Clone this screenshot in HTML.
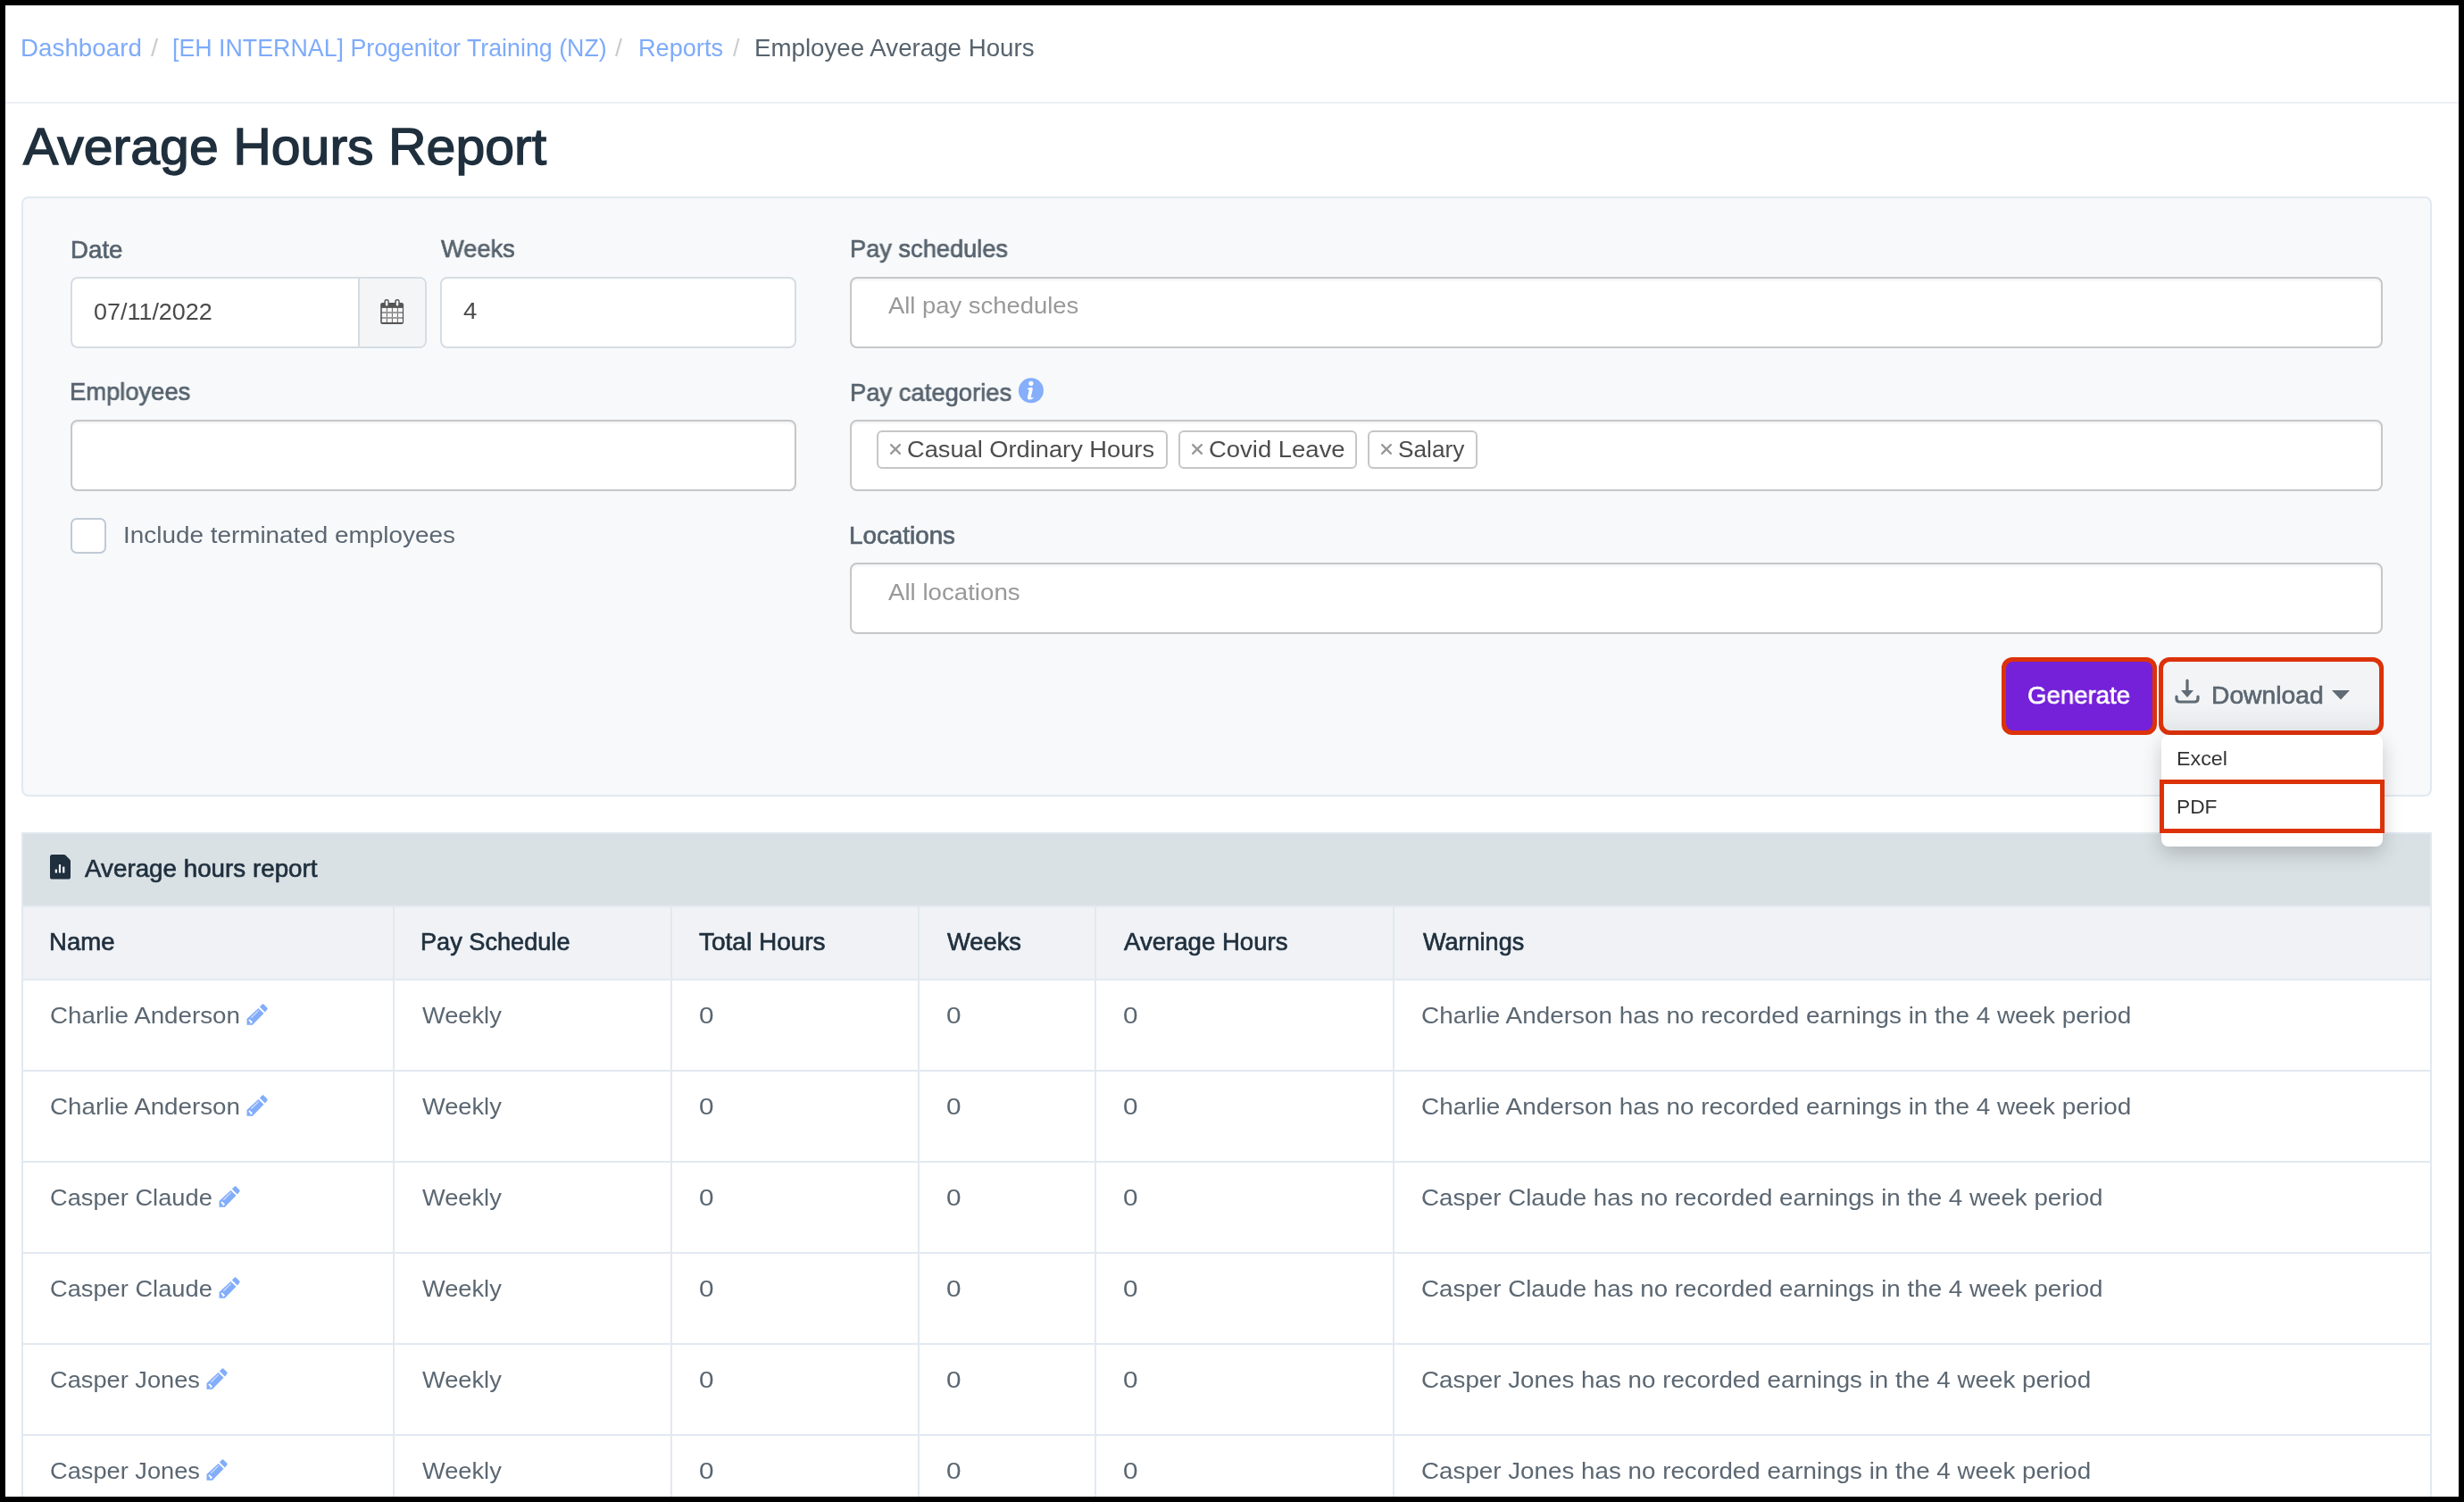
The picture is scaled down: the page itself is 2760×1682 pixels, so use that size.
<!DOCTYPE html>
<html><head><meta charset="utf-8"><style>
html,body{margin:0;padding:0;}
body{width:2760px;height:1682px;position:relative;overflow:hidden;background:#fff;font-family:"Liberation Sans",sans-serif;}
.t{position:absolute;white-space:nowrap;line-height:1;transform-origin:0 0;will-change:transform;}
.box{position:absolute;box-sizing:content-box;}
.sel{background:#fff;border:2px solid #c7c7c7;border-radius:8px;box-shadow:inset 0 2px 3px rgba(0,0,0,0.05);}
.frame{position:absolute;left:0;top:0;width:2748px;height:1670px;border:6px solid #000;}
</style></head><body>
<div class="t" style="left:23.38px;top:40.82px;font-size:26.79px;color:#7eabfa;font-weight:400;transform:scaleX(1.0373);">Dashboard</div>
<div class="t" style="left:168.80px;top:40.82px;font-size:26.79px;color:#c9cccf;font-weight:400;transform:scaleX(1.0931);">/</div>
<div class="t" style="left:192.93px;top:40.82px;font-size:26.79px;color:#7eabfa;font-weight:400;">[EH INTERNAL] Progenitor Training (NZ)</div>
<div class="t" style="left:689.00px;top:40.82px;font-size:26.79px;color:#c9cccf;font-weight:400;transform:scaleX(1.0665);">/</div>
<div class="t" style="left:714.83px;top:40.82px;font-size:26.79px;color:#7eabfa;font-weight:400;transform:scaleX(1.0130);">Reports</div>
<div class="t" style="left:820.60px;top:40.82px;font-size:26.79px;color:#c9cccf;font-weight:400;transform:scaleX(0.9865);">/</div>
<div class="t" style="left:845.18px;top:40.82px;font-size:26.79px;color:#56636e;font-weight:400;transform:scaleX(1.0342);">Employee Average Hours</div>
<div class="box" style="left:6px;top:114px;width:2748px;height:2px;background:#eceff3"></div>
<div class="t" style="left:25.59px;top:136.10px;font-size:57.77px;color:#1f2f3d;font-weight:400;-webkit-text-stroke:1.39px #1f2f3d;transform:scaleX(1.0216);">Average Hours Report</div>
<div class="box" style="left:24px;top:220px;width:2696px;height:668px;background:#f8f9fb;border:2px solid #e2e9f0;border-radius:8px"></div>
<div class="t" style="left:78.56px;top:265.61px;font-size:27.63px;color:#56636e;font-weight:400;-webkit-text-stroke:0.66px #56636e;transform:scaleX(1.0030);">Date</div>
<div class="t" style="left:493.97px;top:265.31px;font-size:27.63px;color:#56636e;font-weight:400;-webkit-text-stroke:0.66px #56636e;transform:scaleX(0.9864);">Weeks</div>
<div class="t" style="left:952.09px;top:265.11px;font-size:27.63px;color:#56636e;font-weight:400;-webkit-text-stroke:0.66px #56636e;transform:scaleX(0.9853);">Pay schedules</div>
<div class="t" style="left:78.38px;top:425.41px;font-size:27.63px;color:#56636e;font-weight:400;-webkit-text-stroke:0.66px #56636e;transform:scaleX(0.9903);">Employees</div>
<div class="t" style="left:951.88px;top:425.61px;font-size:27.63px;color:#56636e;font-weight:400;-webkit-text-stroke:0.66px #56636e;transform:scaleX(0.9915);">Pay categories</div>
<div class="t" style="left:950.95px;top:586.31px;font-size:27.63px;color:#56636e;font-weight:400;-webkit-text-stroke:0.66px #56636e;transform:scaleX(1.0064);">Locations</div>
<div class="box" style="left:79px;top:310px;width:395px;height:76px;background:#fff;border:2px solid #d5dde3;border-radius:8px;overflow:hidden"><div style="position:absolute;left:320px;top:0;width:75px;height:76px;background:#f3f5f7;border-left:2px solid #d5dde3"></div></div>
<div class="t" style="left:104.92px;top:335.56px;font-size:26.51px;color:#4a4a4a;font-weight:400;transform:scaleX(1.0162);">07/11/2022</div>
<svg class="box" style="left:420px;top:330px" width="38" height="38" viewBox="0 0 38 38"><rect x="6.2" y="9" width="25.9" height="23.9" rx="2.2" fill="#555"/><rect x="7.8" y="19.1" width="23" height="1.6" fill="#9b9b9b"/><rect x="7.8" y="25.0" width="23" height="1.6" fill="#9b9b9b"/><rect x="7.8" y="14.9" width="5.1" height="4.2" fill="#f7f7f8"/><rect x="13.8" y="14.9" width="5.1" height="4.2" fill="#f7f7f8"/><rect x="19.8" y="14.9" width="5.1" height="4.2" fill="#f7f7f8"/><rect x="25.8" y="14.9" width="5.1" height="4.2" fill="#f7f7f8"/><rect x="7.8" y="20.8" width="5.1" height="4.2" fill="#f7f7f8"/><rect x="13.8" y="20.8" width="5.1" height="4.2" fill="#f7f7f8"/><rect x="19.8" y="20.8" width="5.1" height="4.2" fill="#f7f7f8"/><rect x="25.8" y="20.8" width="5.1" height="4.2" fill="#f7f7f8"/><rect x="7.8" y="26.7" width="5.1" height="4.2" fill="#f7f7f8"/><rect x="13.8" y="26.7" width="5.1" height="4.2" fill="#f7f7f8"/><rect x="19.8" y="26.7" width="5.1" height="4.2" fill="#f7f7f8"/><rect x="25.8" y="26.7" width="5.1" height="4.2" fill="#f7f7f8"/><rect x="10.4" y="5.1" width="5.4" height="8.1" rx="2.7" fill="#555"/><rect x="11.9" y="6.6" width="2.5" height="6" rx="1.25" fill="#f7f7f8"/><rect x="22.3" y="5.1" width="5.4" height="8.1" rx="2.7" fill="#555"/><rect x="23.8" y="6.6" width="2.5" height="6" rx="1.25" fill="#f7f7f8"/></svg>
<div class="box" style="left:493px;top:310px;width:395px;height:76px;background:#fff;border:2px solid #d5dde3;border-radius:8px"></div>
<div class="t" style="left:519.45px;top:335.06px;font-size:26.51px;color:#4a4a4a;font-weight:400;transform:scaleX(1.0354);">4</div>
<div class="box sel" style="left:952px;top:310px;width:1713px;height:76px"></div>
<div class="t" style="left:995.40px;top:329.85px;font-size:25.81px;color:#999999;font-weight:400;transform:scaleX(1.0622);">All pay schedules</div>
<div class="box sel" style="left:79px;top:470px;width:809px;height:76px"></div>
<div class="box sel" style="left:952px;top:470px;width:1713px;height:76px"></div>
<div class="box sel" style="left:952px;top:630px;width:1713px;height:76px"></div>
<div class="t" style="left:994.70px;top:651.35px;font-size:25.81px;color:#999999;font-weight:400;transform:scaleX(1.0723);">All locations</div>
<div class="box" style="left:79px;top:580px;width:36px;height:36px;background:#fff;border:2px solid #c0cad5;border-radius:7px"></div>
<div class="t" style="left:138.49px;top:586.75px;font-size:25.81px;color:#5b6772;font-weight:400;transform:scaleX(1.0806);">Include terminated employees</div>
<svg class="box" style="left:1136px;top:418px" width="38" height="38" viewBox="0 0 38 38"><circle cx="18.9" cy="19.35" r="14" fill="#85aefb"/><circle cx="18.9" cy="11.3" r="2.6" fill="#fff"/><path d="M14.2 17.3 Q17 15.6 19.8 15.8 Q21.2 16.4 20.6 19 L18.8 26.3 Q18.6 27.6 19.6 27.3 L22 27.2 Q20.5 29.6 16.8 29.5 Q14.6 29.3 15 26.8 L16.6 19.3 Q16.8 17.6 14.2 17.3 Z" fill="#fff"/></svg>
<div class="box" style="left:982px;top:482px;width:322px;height:39px;background:#fff;border:2px solid #c6c6c6;border-radius:6px"></div><svg class="box" style="left:996.1px;top:495.5px" width="14" height="14" viewBox="0 0 14 14"><path d="M2.1 2.1 L11.9 11.9 M11.9 2.1 L2.1 11.9" stroke="#999" stroke-width="2.3" stroke-linecap="round"/></svg><div class="t" style="left:1016.24px;top:490.09px;font-size:26.23px;color:#4c4c4c;font-weight:400;transform:scaleX(1.0389);">Casual Ordinary Hours</div>
<div class="box" style="left:1320px;top:482px;width:196px;height:39px;background:#fff;border:2px solid #c6c6c6;border-radius:6px"></div><svg class="box" style="left:1333.5px;top:495.5px" width="14" height="14" viewBox="0 0 14 14"><path d="M2.1 2.1 L11.9 11.9 M11.9 2.1 L2.1 11.9" stroke="#999" stroke-width="2.3" stroke-linecap="round"/></svg><div class="t" style="left:1353.63px;top:490.09px;font-size:26.23px;color:#4c4c4c;font-weight:400;transform:scaleX(1.0473);">Covid Leave</div>
<div class="box" style="left:1532px;top:482px;width:119px;height:39px;background:#fff;border:2px solid #c6c6c6;border-radius:6px"></div><svg class="box" style="left:1545.5px;top:495.5px" width="14" height="14" viewBox="0 0 14 14"><path d="M2.1 2.1 L11.9 11.9 M11.9 2.1 L2.1 11.9" stroke="#999" stroke-width="2.3" stroke-linecap="round"/></svg><div class="t" style="left:1565.69px;top:490.09px;font-size:26.23px;color:#4c4c4c;font-weight:400;">Salary</div>
<div class="box" style="left:2242px;top:736px;width:164px;height:77px;border:5px solid #dc3209;border-radius:12px;background:#dc3209"><div style="position:absolute;left:0;top:0;right:0;bottom:0;background:#7421d9;border-radius:8px"></div></div>
<div class="t" style="left:2270.70px;top:764.98px;font-size:27.91px;color:#fff;font-weight:400;-webkit-text-stroke:0.67px #fff;transform:scaleX(0.9893);">Generate</div>
<div class="box" style="left:2418px;top:736px;width:242px;height:77px;border:5px solid #dc3209;border-radius:12px;background:#dc3209"><div style="position:absolute;left:0;top:0;right:0;bottom:0;background:linear-gradient(#f2f4f6 0%,#f2f4f6 60%,#e6e9ec 100%);border-radius:8px"></div></div>
<svg class="box" style="left:2436px;top:760px" width="28" height="28" viewBox="0 0 28 28"><path d="M14 2 V16" stroke="#5f6b75" stroke-width="3.2" stroke-linecap="round"/><path d="M7 13 L14 21 L21 13 Z" fill="#5f6b75"/><path d="M2 20 V22.2 Q2 26 5.8 26 H22.2 Q26 26 26 22.2 V20" fill="none" stroke="#5f6b75" stroke-width="3.2" stroke-linecap="round"/></svg>
<div class="t" style="left:2476.92px;top:765.18px;font-size:27.91px;color:#5b6670;font-weight:400;-webkit-text-stroke:0.67px #5b6670;transform:scaleX(1.0120);">Download</div>
<svg class="box" style="left:2612px;top:773px" width="20" height="11" viewBox="0 0 20 11"><path d="M0 0 H20 L10 10.5 Z" fill="#5f6b75"/></svg>
<div class="box" style="left:24px;top:932px;width:2700px;height:760px;background:#fff"></div>
<div class="box" style="left:24px;top:932px;width:2700px;height:2px;background:#e2e9f0"></div>
<div class="box" style="left:26px;top:934px;width:2696px;height:80px;background:#dae1e5"></div>
<div class="box" style="left:24px;top:1014px;width:2700px;height:2px;background:#e2e9f0"></div>
<div class="box" style="left:26px;top:1016px;width:2696px;height:80px;background:#f0f2f6"></div>
<div class="box" style="left:24px;top:1096px;width:2700px;height:2px;background:#e2e9f0"></div>
<div class="box" style="left:24px;top:1198px;width:2700px;height:2px;background:#e2e9f0"></div>
<div class="box" style="left:24px;top:1300px;width:2700px;height:2px;background:#e2e9f0"></div>
<div class="box" style="left:24px;top:1402px;width:2700px;height:2px;background:#e2e9f0"></div>
<div class="box" style="left:24px;top:1504px;width:2700px;height:2px;background:#e2e9f0"></div>
<div class="box" style="left:24px;top:1606px;width:2700px;height:2px;background:#e2e9f0"></div>
<div class="box" style="left:24px;top:1708px;width:2700px;height:2px;background:#e2e9f0"></div>
<div class="box" style="left:24px;top:932px;width:2px;height:768px;background:#e2e9f0"></div>
<div class="box" style="left:440px;top:1016px;width:2px;height:684px;background:#e2e9f0"></div>
<div class="box" style="left:751px;top:1016px;width:2px;height:684px;background:#e2e9f0"></div>
<div class="box" style="left:1028px;top:1016px;width:2px;height:684px;background:#e2e9f0"></div>
<div class="box" style="left:1226px;top:1016px;width:2px;height:684px;background:#e2e9f0"></div>
<div class="box" style="left:1560px;top:1016px;width:2px;height:684px;background:#e2e9f0"></div>
<div class="box" style="left:2722px;top:932px;width:2px;height:768px;background:#e2e9f0"></div>
<svg class="box" style="left:56px;top:957.4px" width="23" height="28" viewBox="0 0 23 28"><path d="M2.5 0 H15.8 Q16.6 0 17.2 0.6 L22.4 5.8 Q23 6.4 23 7.2 V25 Q23 27.6 20.4 27.6 H2.5 Q0 27.6 0 25 V2.5 Q0 0 2.5 0 Z" fill="#1f2f3d"/><rect x="5.7" y="16.4" width="2.3" height="4.2" rx="0.4" fill="#eef1f3"/><rect x="9.9" y="10.9" width="2.2" height="9.7" rx="0.4" fill="#eef1f3"/><rect x="14.1" y="13.4" width="2.3" height="7.2" rx="0.4" fill="#eef1f3"/></svg>
<div class="t" style="left:95.48px;top:959.62px;font-size:26.79px;color:#1f2f3d;font-weight:400;-webkit-text-stroke:0.64px #1f2f3d;transform:scaleX(1.0375);">Average hours report</div>
<div class="t" style="left:55.47px;top:1041.50px;font-size:26.93px;color:#1f2f3d;font-weight:400;-webkit-text-stroke:0.65px #1f2f3d;transform:scaleX(1.0230);">Name</div>
<div class="t" style="left:471.30px;top:1041.50px;font-size:26.93px;color:#1f2f3d;font-weight:400;-webkit-text-stroke:0.65px #1f2f3d;transform:scaleX(1.0082);">Pay Schedule</div>
<div class="t" style="left:783.22px;top:1041.50px;font-size:26.93px;color:#1f2f3d;font-weight:400;-webkit-text-stroke:0.65px #1f2f3d;transform:scaleX(1.0400);">Total Hours</div>
<div class="t" style="left:1060.77px;top:1041.50px;font-size:26.93px;color:#1f2f3d;font-weight:400;-webkit-text-stroke:0.65px #1f2f3d;transform:scaleX(1.0144);">Weeks</div>
<div class="t" style="left:1258.68px;top:1041.50px;font-size:26.93px;color:#1f2f3d;font-weight:400;-webkit-text-stroke:0.65px #1f2f3d;transform:scaleX(1.0245);">Average Hours</div>
<div class="t" style="left:1593.97px;top:1041.50px;font-size:26.93px;color:#1f2f3d;font-weight:400;-webkit-text-stroke:0.65px #1f2f3d;transform:scaleX(1.0045);">Warnings</div>
<div class="t" style="left:55.91px;top:1123.76px;font-size:26.51px;color:#5b6772;font-weight:400;transform:scaleX(1.0478);">Charlie Anderson</div>
<svg class="box" style="left:269.5px;top:1118px" width="36" height="36" viewBox="0 0 36 36"><path d="M20.9 9.4 L23.5 6.8 Q24.5 5.8 25.5 6.8 L29.2 10.4 Q30.2 11.4 29.3 12.5 L26.9 15.5 Z" fill="#82adfa"/><path d="M19.4 10.9 L25.5 16.8 L12.9 29.7 L6.5 29.7 L6.5 23 Z" fill="#82adfa"/><path d="M8.3 24.8 L9.6 23.2 L13 26.4 L11.6 27.9 L10.5 27.9 L10.2 26.2 Z" fill="#fff"/><path d="M19.7 13.4 L11.3 21.7" stroke="#cfdffd" stroke-width="1.3"/></svg>
<div class="t" style="left:472.73px;top:1123.76px;font-size:26.51px;color:#5b6772;font-weight:400;transform:scaleX(1.0271);">Weekly</div>
<div class="t" style="left:783.11px;top:1123.76px;font-size:26.51px;color:#5b6772;font-weight:400;transform:scaleX(1.1237);">0</div>
<div class="t" style="left:1060.31px;top:1123.76px;font-size:26.51px;color:#5b6772;font-weight:400;transform:scaleX(1.1237);">0</div>
<div class="t" style="left:1257.81px;top:1123.76px;font-size:26.51px;color:#5b6772;font-weight:400;transform:scaleX(1.1237);">0</div>
<div class="t" style="left:1591.61px;top:1123.76px;font-size:26.51px;color:#5b6772;font-weight:400;transform:scaleX(1.0523);">Charlie Anderson has no recorded earnings in the 4 week period</div>
<div class="t" style="left:55.91px;top:1225.76px;font-size:26.51px;color:#5b6772;font-weight:400;transform:scaleX(1.0478);">Charlie Anderson</div>
<svg class="box" style="left:269.5px;top:1220px" width="36" height="36" viewBox="0 0 36 36"><path d="M20.9 9.4 L23.5 6.8 Q24.5 5.8 25.5 6.8 L29.2 10.4 Q30.2 11.4 29.3 12.5 L26.9 15.5 Z" fill="#82adfa"/><path d="M19.4 10.9 L25.5 16.8 L12.9 29.7 L6.5 29.7 L6.5 23 Z" fill="#82adfa"/><path d="M8.3 24.8 L9.6 23.2 L13 26.4 L11.6 27.9 L10.5 27.9 L10.2 26.2 Z" fill="#fff"/><path d="M19.7 13.4 L11.3 21.7" stroke="#cfdffd" stroke-width="1.3"/></svg>
<div class="t" style="left:472.73px;top:1225.76px;font-size:26.51px;color:#5b6772;font-weight:400;transform:scaleX(1.0271);">Weekly</div>
<div class="t" style="left:783.11px;top:1225.76px;font-size:26.51px;color:#5b6772;font-weight:400;transform:scaleX(1.1237);">0</div>
<div class="t" style="left:1060.31px;top:1225.76px;font-size:26.51px;color:#5b6772;font-weight:400;transform:scaleX(1.1237);">0</div>
<div class="t" style="left:1257.81px;top:1225.76px;font-size:26.51px;color:#5b6772;font-weight:400;transform:scaleX(1.1237);">0</div>
<div class="t" style="left:1591.61px;top:1225.76px;font-size:26.51px;color:#5b6772;font-weight:400;transform:scaleX(1.0523);">Charlie Anderson has no recorded earnings in the 4 week period</div>
<div class="t" style="left:55.94px;top:1327.76px;font-size:26.51px;color:#5b6772;font-weight:400;transform:scaleX(1.0284);">Casper Claude</div>
<svg class="box" style="left:238.5px;top:1322px" width="36" height="36" viewBox="0 0 36 36"><path d="M20.9 9.4 L23.5 6.8 Q24.5 5.8 25.5 6.8 L29.2 10.4 Q30.2 11.4 29.3 12.5 L26.9 15.5 Z" fill="#82adfa"/><path d="M19.4 10.9 L25.5 16.8 L12.9 29.7 L6.5 29.7 L6.5 23 Z" fill="#82adfa"/><path d="M8.3 24.8 L9.6 23.2 L13 26.4 L11.6 27.9 L10.5 27.9 L10.2 26.2 Z" fill="#fff"/><path d="M19.7 13.4 L11.3 21.7" stroke="#cfdffd" stroke-width="1.3"/></svg>
<div class="t" style="left:472.73px;top:1327.76px;font-size:26.51px;color:#5b6772;font-weight:400;transform:scaleX(1.0271);">Weekly</div>
<div class="t" style="left:783.11px;top:1327.76px;font-size:26.51px;color:#5b6772;font-weight:400;transform:scaleX(1.1237);">0</div>
<div class="t" style="left:1060.31px;top:1327.76px;font-size:26.51px;color:#5b6772;font-weight:400;transform:scaleX(1.1237);">0</div>
<div class="t" style="left:1257.81px;top:1327.76px;font-size:26.51px;color:#5b6772;font-weight:400;transform:scaleX(1.1237);">0</div>
<div class="t" style="left:1591.61px;top:1327.76px;font-size:26.51px;color:#5b6772;font-weight:400;transform:scaleX(1.0471);">Casper Claude has no recorded earnings in the 4 week period</div>
<div class="t" style="left:55.94px;top:1429.76px;font-size:26.51px;color:#5b6772;font-weight:400;transform:scaleX(1.0284);">Casper Claude</div>
<svg class="box" style="left:238.5px;top:1424px" width="36" height="36" viewBox="0 0 36 36"><path d="M20.9 9.4 L23.5 6.8 Q24.5 5.8 25.5 6.8 L29.2 10.4 Q30.2 11.4 29.3 12.5 L26.9 15.5 Z" fill="#82adfa"/><path d="M19.4 10.9 L25.5 16.8 L12.9 29.7 L6.5 29.7 L6.5 23 Z" fill="#82adfa"/><path d="M8.3 24.8 L9.6 23.2 L13 26.4 L11.6 27.9 L10.5 27.9 L10.2 26.2 Z" fill="#fff"/><path d="M19.7 13.4 L11.3 21.7" stroke="#cfdffd" stroke-width="1.3"/></svg>
<div class="t" style="left:472.73px;top:1429.76px;font-size:26.51px;color:#5b6772;font-weight:400;transform:scaleX(1.0271);">Weekly</div>
<div class="t" style="left:783.11px;top:1429.76px;font-size:26.51px;color:#5b6772;font-weight:400;transform:scaleX(1.1237);">0</div>
<div class="t" style="left:1060.31px;top:1429.76px;font-size:26.51px;color:#5b6772;font-weight:400;transform:scaleX(1.1237);">0</div>
<div class="t" style="left:1257.81px;top:1429.76px;font-size:26.51px;color:#5b6772;font-weight:400;transform:scaleX(1.1237);">0</div>
<div class="t" style="left:1591.61px;top:1429.76px;font-size:26.51px;color:#5b6772;font-weight:400;transform:scaleX(1.0471);">Casper Claude has no recorded earnings in the 4 week period</div>
<div class="t" style="left:55.94px;top:1531.76px;font-size:26.51px;color:#5b6772;font-weight:400;transform:scaleX(1.0274);">Casper Jones</div>
<svg class="box" style="left:224.7px;top:1526px" width="36" height="36" viewBox="0 0 36 36"><path d="M20.9 9.4 L23.5 6.8 Q24.5 5.8 25.5 6.8 L29.2 10.4 Q30.2 11.4 29.3 12.5 L26.9 15.5 Z" fill="#82adfa"/><path d="M19.4 10.9 L25.5 16.8 L12.9 29.7 L6.5 29.7 L6.5 23 Z" fill="#82adfa"/><path d="M8.3 24.8 L9.6 23.2 L13 26.4 L11.6 27.9 L10.5 27.9 L10.2 26.2 Z" fill="#fff"/><path d="M19.7 13.4 L11.3 21.7" stroke="#cfdffd" stroke-width="1.3"/></svg>
<div class="t" style="left:472.73px;top:1531.76px;font-size:26.51px;color:#5b6772;font-weight:400;transform:scaleX(1.0271);">Weekly</div>
<div class="t" style="left:783.11px;top:1531.76px;font-size:26.51px;color:#5b6772;font-weight:400;transform:scaleX(1.1237);">0</div>
<div class="t" style="left:1060.31px;top:1531.76px;font-size:26.51px;color:#5b6772;font-weight:400;transform:scaleX(1.1237);">0</div>
<div class="t" style="left:1257.81px;top:1531.76px;font-size:26.51px;color:#5b6772;font-weight:400;transform:scaleX(1.1237);">0</div>
<div class="t" style="left:1591.61px;top:1531.76px;font-size:26.51px;color:#5b6772;font-weight:400;transform:scaleX(1.0479);">Casper Jones has no recorded earnings in the 4 week period</div>
<div class="t" style="left:55.94px;top:1633.76px;font-size:26.51px;color:#5b6772;font-weight:400;transform:scaleX(1.0274);">Casper Jones</div>
<svg class="box" style="left:224.7px;top:1628px" width="36" height="36" viewBox="0 0 36 36"><path d="M20.9 9.4 L23.5 6.8 Q24.5 5.8 25.5 6.8 L29.2 10.4 Q30.2 11.4 29.3 12.5 L26.9 15.5 Z" fill="#82adfa"/><path d="M19.4 10.9 L25.5 16.8 L12.9 29.7 L6.5 29.7 L6.5 23 Z" fill="#82adfa"/><path d="M8.3 24.8 L9.6 23.2 L13 26.4 L11.6 27.9 L10.5 27.9 L10.2 26.2 Z" fill="#fff"/><path d="M19.7 13.4 L11.3 21.7" stroke="#cfdffd" stroke-width="1.3"/></svg>
<div class="t" style="left:472.73px;top:1633.76px;font-size:26.51px;color:#5b6772;font-weight:400;transform:scaleX(1.0271);">Weekly</div>
<div class="t" style="left:783.11px;top:1633.76px;font-size:26.51px;color:#5b6772;font-weight:400;transform:scaleX(1.1237);">0</div>
<div class="t" style="left:1060.31px;top:1633.76px;font-size:26.51px;color:#5b6772;font-weight:400;transform:scaleX(1.1237);">0</div>
<div class="t" style="left:1257.81px;top:1633.76px;font-size:26.51px;color:#5b6772;font-weight:400;transform:scaleX(1.1237);">0</div>
<div class="t" style="left:1591.61px;top:1633.76px;font-size:26.51px;color:#5b6772;font-weight:400;transform:scaleX(1.0479);">Casper Jones has no recorded earnings in the 4 week period</div>
<div class="box" style="left:2421px;top:823px;width:248px;height:125px;background:#fff;border-radius:8px;box-shadow:0 8px 22px rgba(0,0,0,0.2)"></div>
<div class="t" style="left:2438.34px;top:838.57px;font-size:21.77px;color:#333;font-weight:400;transform:scaleX(1.0706);">Excel</div>
<div class="box" style="left:2419px;top:873px;width:242px;height:50px;border:5px solid #dc3209"></div>
<div class="t" style="left:2438.18px;top:892.77px;font-size:21.77px;color:#333;font-weight:400;transform:scaleX(1.0459);">PDF</div>
<div class="frame"></div>
</body></html>
